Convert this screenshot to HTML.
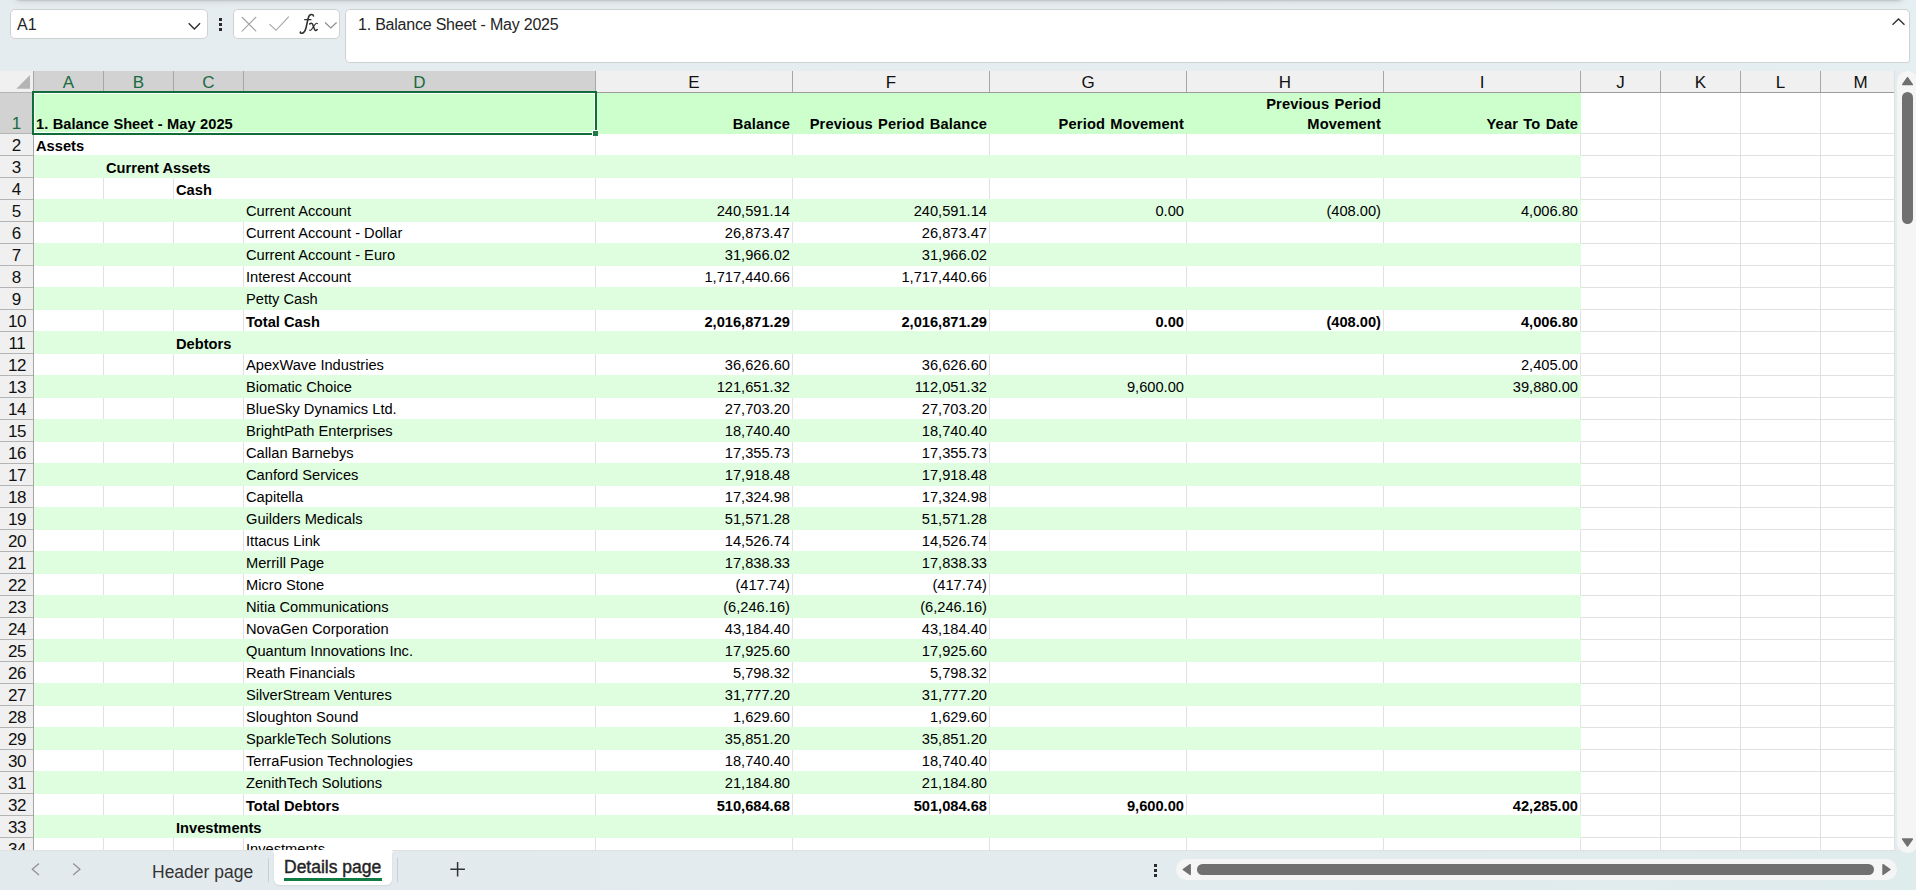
<!DOCTYPE html>
<html><head><meta charset="utf-8"><title>Sheet</title>
<style>
html,body{margin:0;padding:0}
body{width:1916px;height:890px;overflow:hidden;position:relative;font-family:"Liberation Sans",sans-serif;background:#e5ecf0;color:#000}
div,span{box-sizing:border-box}
.abs,.abs *{position:absolute}
#top{position:absolute;left:0;top:0;width:1916px;height:71px;background:linear-gradient(90deg,#e5ecf0 0%,#e6edf1 60%,#e5eef0 100%)}
#topshadow{position:absolute;left:13px;top:-12px;width:1892px;height:12px;border-radius:0 0 8px 8px;box-shadow:0 1px 2px 0 rgba(0,0,0,.13),0 2px 6px 0 rgba(0,0,0,.09)}
.box{position:absolute;background:#fff;border:1px solid #d1d1d1;border-radius:5px}
#grid{position:absolute;left:0;top:71px;width:1894px;height:779px;background:#fff;overflow:hidden}
#grid div{position:absolute}
.t{font-size:14.67px;line-height:22px;height:22px;white-space:pre;color:#000}
.b{font-weight:bold}
.l{letter-spacing:.15px;word-spacing:1px}
.r{text-align:right}
.ch{top:0;height:21px;line-height:24px;overflow:hidden;font-size:17px;text-align:center;color:#222;background:#f0f0f0}
.rh{left:0;width:33px;font-size:17px;line-height:24px;overflow:hidden;text-align:center;color:#222;background:#f0f0f0}
.vl{width:1px;background:#e1e1e1}
.hl{height:1px;background:#e1e1e1}
#bottom{position:absolute;left:0;top:850px;width:1916px;height:40px;background:linear-gradient(90deg,#e3eaed 0%,#e3ebee 55%,#dfecec 100%)}
#bottom div{position:absolute}
</style></head><body>

<div id="top"><div id="topshadow"></div>
<div class="box" style="left:10px;top:9px;width:198px;height:30px"></div>
<div style="position:absolute;left:17px;top:13.8px;font-size:16px;line-height:22px;color:#242424">A1</div>
<svg style="position:absolute;left:186px;top:20px" width="18" height="12" viewBox="0 0 18 12"><path d="M2.7 3.2 L8.4 9 L14.1 3.2" fill="none" stroke="#2b2b2b" stroke-width="1.3"/></svg>
<div style="position:absolute;left:219px;top:18.2px;width:3px;height:3px;background:#2b2b2b"></div>
<div style="position:absolute;left:219px;top:23.2px;width:3px;height:3px;background:#2b2b2b"></div>
<div style="position:absolute;left:219px;top:28.2px;width:3px;height:3px;background:#2b2b2b"></div>
<div class="box" style="left:233px;top:9px;width:107px;height:30px"></div>
<svg style="position:absolute;left:233px;top:9px" width="107" height="30" viewBox="0 0 107 30"><path d="M8.8 8 L23.2 22.3 M23.2 8 L8.8 22.3" fill="none" stroke="#a3a3a3" stroke-width="1.1"/><path d="M36.5 15.2 L43 21.3 L55.8 7.6" fill="none" stroke="#a3a3a3" stroke-width="1.1"/><path d="M92 13.5 L97.8 18.9 L103.6 13.5" fill="none" stroke="#8a8a8a" stroke-width="1.1"/></svg>
<svg style="position:absolute;left:280px;top:5px" width="65" height="40" viewBox="0 0 65 40"><path d="M33.5 11 C33.4 10 32.2 9.5 31 9.6 C29.3 9.9 28.6 11.5 28.1 13.5 L26.2 22 C25.6 25 24.4 28.2 21.6 28.3 C20.6 28.3 20.1 27.8 20.3 27.1" fill="none" stroke="#2e2e2e" stroke-width="1.55" stroke-linecap="round"/><path d="M24.7 14.7 H30.9" fill="none" stroke="#2e2e2e" stroke-width="1.3" stroke-linecap="round"/><path d="M29.8 18.9 C31.3 17.6 32.5 18.4 33 20.2 L34.3 23.9 C34.8 25.7 36 25.9 37.2 24.5" fill="none" stroke="#2e2e2e" stroke-width="1.5" stroke-linecap="round"/><path d="M37.5 18.6 C36.2 17.7 35.3 19 34.2 20.6 L32.4 23.3 C31.4 24.9 30.4 25.9 29.5 25" fill="none" stroke="#2e2e2e" stroke-width="1.05" stroke-linecap="round"/></svg>
<div class="box" style="left:345px;top:9px;width:1565px;height:54px;border-radius:5px 5px 3px 5px"></div>
<div id="ftext" style="position:absolute;left:358px;top:13.8px;font-size:16px;line-height:22px;color:#242424;white-space:pre;letter-spacing:-.22px">1. Balance Sheet - May 2025</div>
<svg style="position:absolute;left:1890px;top:16px" width="18" height="12" viewBox="0 0 18 12"><path d="M2.5 8.8 L8.5 3 L14.5 8.8" fill="none" stroke="#333" stroke-width="1.4"/></svg>
</div>
<div id="grid">
<div style="left:34px;top:22px;width:1547px;height:41px;background:#ccffcc"></div>
<div style="left:34px;top:84px;width:1547px;height:23px;background:#dffddf"></div>
<div style="left:34px;top:128px;width:1547px;height:23px;background:#dffddf"></div>
<div style="left:34px;top:172px;width:1547px;height:23px;background:#dffddf"></div>
<div style="left:34px;top:216px;width:1547px;height:23px;background:#dffddf"></div>
<div style="left:34px;top:260px;width:1547px;height:23px;background:#dffddf"></div>
<div style="left:34px;top:304px;width:1547px;height:23px;background:#dffddf"></div>
<div style="left:34px;top:348px;width:1547px;height:23px;background:#dffddf"></div>
<div style="left:34px;top:392px;width:1547px;height:23px;background:#dffddf"></div>
<div style="left:34px;top:436px;width:1547px;height:23px;background:#dffddf"></div>
<div style="left:34px;top:480px;width:1547px;height:23px;background:#dffddf"></div>
<div style="left:34px;top:524px;width:1547px;height:23px;background:#dffddf"></div>
<div style="left:34px;top:568px;width:1547px;height:23px;background:#dffddf"></div>
<div style="left:34px;top:612px;width:1547px;height:23px;background:#dffddf"></div>
<div style="left:34px;top:656px;width:1547px;height:23px;background:#dffddf"></div>
<div style="left:34px;top:700px;width:1547px;height:23px;background:#dffddf"></div>
<div style="left:34px;top:744px;width:1547px;height:23px;background:#dffddf"></div>
<div class="hl" style="left:1581px;top:62px;width:313px"></div>
<div class="hl" style="left:1581px;top:84px;width:313px"></div>
<div class="hl" style="left:1581px;top:106px;width:313px"></div>
<div class="hl" style="left:1581px;top:128px;width:313px"></div>
<div class="hl" style="left:1581px;top:150px;width:313px"></div>
<div class="hl" style="left:1581px;top:172px;width:313px"></div>
<div class="hl" style="left:1581px;top:194px;width:313px"></div>
<div class="hl" style="left:1581px;top:216px;width:313px"></div>
<div class="hl" style="left:1581px;top:238px;width:313px"></div>
<div class="hl" style="left:1581px;top:260px;width:313px"></div>
<div class="hl" style="left:1581px;top:282px;width:313px"></div>
<div class="hl" style="left:1581px;top:304px;width:313px"></div>
<div class="hl" style="left:1581px;top:326px;width:313px"></div>
<div class="hl" style="left:1581px;top:348px;width:313px"></div>
<div class="hl" style="left:1581px;top:370px;width:313px"></div>
<div class="hl" style="left:1581px;top:392px;width:313px"></div>
<div class="hl" style="left:1581px;top:414px;width:313px"></div>
<div class="hl" style="left:1581px;top:436px;width:313px"></div>
<div class="hl" style="left:1581px;top:458px;width:313px"></div>
<div class="hl" style="left:1581px;top:480px;width:313px"></div>
<div class="hl" style="left:1581px;top:502px;width:313px"></div>
<div class="hl" style="left:1581px;top:524px;width:313px"></div>
<div class="hl" style="left:1581px;top:546px;width:313px"></div>
<div class="hl" style="left:1581px;top:568px;width:313px"></div>
<div class="hl" style="left:1581px;top:590px;width:313px"></div>
<div class="hl" style="left:1581px;top:612px;width:313px"></div>
<div class="hl" style="left:1581px;top:634px;width:313px"></div>
<div class="hl" style="left:1581px;top:656px;width:313px"></div>
<div class="hl" style="left:1581px;top:678px;width:313px"></div>
<div class="hl" style="left:1581px;top:700px;width:313px"></div>
<div class="hl" style="left:1581px;top:722px;width:313px"></div>
<div class="hl" style="left:1581px;top:744px;width:313px"></div>
<div class="hl" style="left:1581px;top:766px;width:313px"></div>
<div class="hl" style="left:1581px;top:788px;width:313px"></div>
<div class="vl" style="left:1660px;top:22px;height:757px"></div>
<div class="vl" style="left:1740px;top:22px;height:757px"></div>
<div class="vl" style="left:1820px;top:22px;height:757px"></div>
<div class="vl" style="left:595px;top:63px;height:21px"></div>
<div class="vl" style="left:792px;top:63px;height:21px"></div>
<div class="vl" style="left:989px;top:63px;height:21px"></div>
<div class="vl" style="left:1186px;top:63px;height:21px"></div>
<div class="vl" style="left:1383px;top:63px;height:21px"></div>
<div class="vl" style="left:1580px;top:63px;height:21px"></div>
<div class="vl" style="left:103px;top:107px;height:21px"></div>
<div class="vl" style="left:173px;top:107px;height:21px"></div>
<div class="vl" style="left:595px;top:107px;height:21px"></div>
<div class="vl" style="left:792px;top:107px;height:21px"></div>
<div class="vl" style="left:989px;top:107px;height:21px"></div>
<div class="vl" style="left:1186px;top:107px;height:21px"></div>
<div class="vl" style="left:1383px;top:107px;height:21px"></div>
<div class="vl" style="left:1580px;top:107px;height:21px"></div>
<div class="vl" style="left:103px;top:151px;height:21px"></div>
<div class="vl" style="left:173px;top:151px;height:21px"></div>
<div class="vl" style="left:243px;top:151px;height:21px"></div>
<div class="vl" style="left:595px;top:151px;height:21px"></div>
<div class="vl" style="left:792px;top:151px;height:21px"></div>
<div class="vl" style="left:989px;top:151px;height:21px"></div>
<div class="vl" style="left:1186px;top:151px;height:21px"></div>
<div class="vl" style="left:1383px;top:151px;height:21px"></div>
<div class="vl" style="left:1580px;top:151px;height:21px"></div>
<div class="vl" style="left:103px;top:195px;height:21px"></div>
<div class="vl" style="left:173px;top:195px;height:21px"></div>
<div class="vl" style="left:243px;top:195px;height:21px"></div>
<div class="vl" style="left:595px;top:195px;height:21px"></div>
<div class="vl" style="left:792px;top:195px;height:21px"></div>
<div class="vl" style="left:989px;top:195px;height:21px"></div>
<div class="vl" style="left:1186px;top:195px;height:21px"></div>
<div class="vl" style="left:1383px;top:195px;height:21px"></div>
<div class="vl" style="left:1580px;top:195px;height:21px"></div>
<div class="vl" style="left:103px;top:239px;height:21px"></div>
<div class="vl" style="left:173px;top:239px;height:21px"></div>
<div class="vl" style="left:243px;top:239px;height:21px"></div>
<div class="vl" style="left:595px;top:239px;height:21px"></div>
<div class="vl" style="left:792px;top:239px;height:21px"></div>
<div class="vl" style="left:989px;top:239px;height:21px"></div>
<div class="vl" style="left:1186px;top:239px;height:21px"></div>
<div class="vl" style="left:1383px;top:239px;height:21px"></div>
<div class="vl" style="left:1580px;top:239px;height:21px"></div>
<div class="vl" style="left:103px;top:283px;height:21px"></div>
<div class="vl" style="left:173px;top:283px;height:21px"></div>
<div class="vl" style="left:243px;top:283px;height:21px"></div>
<div class="vl" style="left:595px;top:283px;height:21px"></div>
<div class="vl" style="left:792px;top:283px;height:21px"></div>
<div class="vl" style="left:989px;top:283px;height:21px"></div>
<div class="vl" style="left:1186px;top:283px;height:21px"></div>
<div class="vl" style="left:1383px;top:283px;height:21px"></div>
<div class="vl" style="left:1580px;top:283px;height:21px"></div>
<div class="vl" style="left:103px;top:327px;height:21px"></div>
<div class="vl" style="left:173px;top:327px;height:21px"></div>
<div class="vl" style="left:243px;top:327px;height:21px"></div>
<div class="vl" style="left:595px;top:327px;height:21px"></div>
<div class="vl" style="left:792px;top:327px;height:21px"></div>
<div class="vl" style="left:989px;top:327px;height:21px"></div>
<div class="vl" style="left:1186px;top:327px;height:21px"></div>
<div class="vl" style="left:1383px;top:327px;height:21px"></div>
<div class="vl" style="left:1580px;top:327px;height:21px"></div>
<div class="vl" style="left:103px;top:371px;height:21px"></div>
<div class="vl" style="left:173px;top:371px;height:21px"></div>
<div class="vl" style="left:243px;top:371px;height:21px"></div>
<div class="vl" style="left:595px;top:371px;height:21px"></div>
<div class="vl" style="left:792px;top:371px;height:21px"></div>
<div class="vl" style="left:989px;top:371px;height:21px"></div>
<div class="vl" style="left:1186px;top:371px;height:21px"></div>
<div class="vl" style="left:1383px;top:371px;height:21px"></div>
<div class="vl" style="left:1580px;top:371px;height:21px"></div>
<div class="vl" style="left:103px;top:415px;height:21px"></div>
<div class="vl" style="left:173px;top:415px;height:21px"></div>
<div class="vl" style="left:243px;top:415px;height:21px"></div>
<div class="vl" style="left:595px;top:415px;height:21px"></div>
<div class="vl" style="left:792px;top:415px;height:21px"></div>
<div class="vl" style="left:989px;top:415px;height:21px"></div>
<div class="vl" style="left:1186px;top:415px;height:21px"></div>
<div class="vl" style="left:1383px;top:415px;height:21px"></div>
<div class="vl" style="left:1580px;top:415px;height:21px"></div>
<div class="vl" style="left:103px;top:459px;height:21px"></div>
<div class="vl" style="left:173px;top:459px;height:21px"></div>
<div class="vl" style="left:243px;top:459px;height:21px"></div>
<div class="vl" style="left:595px;top:459px;height:21px"></div>
<div class="vl" style="left:792px;top:459px;height:21px"></div>
<div class="vl" style="left:989px;top:459px;height:21px"></div>
<div class="vl" style="left:1186px;top:459px;height:21px"></div>
<div class="vl" style="left:1383px;top:459px;height:21px"></div>
<div class="vl" style="left:1580px;top:459px;height:21px"></div>
<div class="vl" style="left:103px;top:503px;height:21px"></div>
<div class="vl" style="left:173px;top:503px;height:21px"></div>
<div class="vl" style="left:243px;top:503px;height:21px"></div>
<div class="vl" style="left:595px;top:503px;height:21px"></div>
<div class="vl" style="left:792px;top:503px;height:21px"></div>
<div class="vl" style="left:989px;top:503px;height:21px"></div>
<div class="vl" style="left:1186px;top:503px;height:21px"></div>
<div class="vl" style="left:1383px;top:503px;height:21px"></div>
<div class="vl" style="left:1580px;top:503px;height:21px"></div>
<div class="vl" style="left:103px;top:547px;height:21px"></div>
<div class="vl" style="left:173px;top:547px;height:21px"></div>
<div class="vl" style="left:243px;top:547px;height:21px"></div>
<div class="vl" style="left:595px;top:547px;height:21px"></div>
<div class="vl" style="left:792px;top:547px;height:21px"></div>
<div class="vl" style="left:989px;top:547px;height:21px"></div>
<div class="vl" style="left:1186px;top:547px;height:21px"></div>
<div class="vl" style="left:1383px;top:547px;height:21px"></div>
<div class="vl" style="left:1580px;top:547px;height:21px"></div>
<div class="vl" style="left:103px;top:591px;height:21px"></div>
<div class="vl" style="left:173px;top:591px;height:21px"></div>
<div class="vl" style="left:243px;top:591px;height:21px"></div>
<div class="vl" style="left:595px;top:591px;height:21px"></div>
<div class="vl" style="left:792px;top:591px;height:21px"></div>
<div class="vl" style="left:989px;top:591px;height:21px"></div>
<div class="vl" style="left:1186px;top:591px;height:21px"></div>
<div class="vl" style="left:1383px;top:591px;height:21px"></div>
<div class="vl" style="left:1580px;top:591px;height:21px"></div>
<div class="vl" style="left:103px;top:635px;height:21px"></div>
<div class="vl" style="left:173px;top:635px;height:21px"></div>
<div class="vl" style="left:243px;top:635px;height:21px"></div>
<div class="vl" style="left:595px;top:635px;height:21px"></div>
<div class="vl" style="left:792px;top:635px;height:21px"></div>
<div class="vl" style="left:989px;top:635px;height:21px"></div>
<div class="vl" style="left:1186px;top:635px;height:21px"></div>
<div class="vl" style="left:1383px;top:635px;height:21px"></div>
<div class="vl" style="left:1580px;top:635px;height:21px"></div>
<div class="vl" style="left:103px;top:679px;height:21px"></div>
<div class="vl" style="left:173px;top:679px;height:21px"></div>
<div class="vl" style="left:243px;top:679px;height:21px"></div>
<div class="vl" style="left:595px;top:679px;height:21px"></div>
<div class="vl" style="left:792px;top:679px;height:21px"></div>
<div class="vl" style="left:989px;top:679px;height:21px"></div>
<div class="vl" style="left:1186px;top:679px;height:21px"></div>
<div class="vl" style="left:1383px;top:679px;height:21px"></div>
<div class="vl" style="left:1580px;top:679px;height:21px"></div>
<div class="vl" style="left:103px;top:723px;height:21px"></div>
<div class="vl" style="left:173px;top:723px;height:21px"></div>
<div class="vl" style="left:243px;top:723px;height:21px"></div>
<div class="vl" style="left:595px;top:723px;height:21px"></div>
<div class="vl" style="left:792px;top:723px;height:21px"></div>
<div class="vl" style="left:989px;top:723px;height:21px"></div>
<div class="vl" style="left:1186px;top:723px;height:21px"></div>
<div class="vl" style="left:1383px;top:723px;height:21px"></div>
<div class="vl" style="left:1580px;top:723px;height:21px"></div>
<div class="vl" style="left:103px;top:767px;height:21px"></div>
<div class="vl" style="left:173px;top:767px;height:21px"></div>
<div class="vl" style="left:243px;top:767px;height:21px"></div>
<div class="vl" style="left:595px;top:767px;height:21px"></div>
<div class="vl" style="left:792px;top:767px;height:21px"></div>
<div class="vl" style="left:989px;top:767px;height:21px"></div>
<div class="vl" style="left:1186px;top:767px;height:21px"></div>
<div class="vl" style="left:1383px;top:767px;height:21px"></div>
<div class="vl" style="left:1580px;top:767px;height:21px"></div>
<div class="t b" style="left:36px;top:43px;width:550px;height:20px;line-height:20px;word-spacing:.4px">1. Balance Sheet - May 2025</div>
<div class="t b l" style="left:596px;top:43px;width:194px;height:20px;line-height:20px;text-align:right;">Balance</div>
<div class="t b l" style="left:793px;top:43px;width:194px;height:20px;line-height:20px;text-align:right;">Previous Period Balance</div>
<div class="t b l" style="left:990px;top:43px;width:194px;height:20px;line-height:20px;text-align:right;">Period Movement</div>
<div class="t b l" style="left:1187px;top:23px;width:194px;height:40px;line-height:20px;text-align:right;">Previous Period<br>Movement</div>
<div class="t b l" style="left:1384px;top:43px;width:194px;height:20px;line-height:20px;text-align:right;">Year To Date</div>
<div class="t b" style="left:36px;top:64px;width:400px;">Assets</div>
<div class="t b" style="left:106px;top:86px;width:400px;">Current Assets</div>
<div class="t b" style="left:176px;top:108px;width:400px;">Cash</div>
<div class="t" style="left:246px;top:129px;width:400px;">Current Account</div>
<div class="t r" style="left:596px;top:129px;width:194px;">240,591.14</div>
<div class="t r" style="left:793px;top:129px;width:194px;">240,591.14</div>
<div class="t r" style="left:990px;top:129px;width:194px;">0.00</div>
<div class="t r" style="left:1187px;top:129px;width:194px;">(408.00)</div>
<div class="t r" style="left:1384px;top:129px;width:194px;">4,006.80</div>
<div class="t" style="left:246px;top:151px;width:400px;">Current Account - Dollar</div>
<div class="t r" style="left:596px;top:151px;width:194px;">26,873.47</div>
<div class="t r" style="left:793px;top:151px;width:194px;">26,873.47</div>
<div class="t" style="left:246px;top:173px;width:400px;">Current Account - Euro</div>
<div class="t r" style="left:596px;top:173px;width:194px;">31,966.02</div>
<div class="t r" style="left:793px;top:173px;width:194px;">31,966.02</div>
<div class="t" style="left:246px;top:195px;width:400px;">Interest Account</div>
<div class="t r" style="left:596px;top:195px;width:194px;">1,717,440.66</div>
<div class="t r" style="left:793px;top:195px;width:194px;">1,717,440.66</div>
<div class="t" style="left:246px;top:217px;width:400px;">Petty Cash</div>
<div class="t b" style="left:246px;top:240px;width:400px;">Total Cash</div>
<div class="t b r" style="left:596px;top:240px;width:194px;">2,016,871.29</div>
<div class="t b r" style="left:793px;top:240px;width:194px;">2,016,871.29</div>
<div class="t b r" style="left:990px;top:240px;width:194px;">0.00</div>
<div class="t b r" style="left:1187px;top:240px;width:194px;">(408.00)</div>
<div class="t b r" style="left:1384px;top:240px;width:194px;">4,006.80</div>
<div class="t b" style="left:176px;top:262px;width:400px;">Debtors</div>
<div class="t" style="left:246px;top:283px;width:400px;">ApexWave Industries</div>
<div class="t r" style="left:596px;top:283px;width:194px;">36,626.60</div>
<div class="t r" style="left:793px;top:283px;width:194px;">36,626.60</div>
<div class="t r" style="left:1384px;top:283px;width:194px;">2,405.00</div>
<div class="t" style="left:246px;top:305px;width:400px;">Biomatic Choice</div>
<div class="t r" style="left:596px;top:305px;width:194px;">121,651.32</div>
<div class="t r" style="left:793px;top:305px;width:194px;">112,051.32</div>
<div class="t r" style="left:990px;top:305px;width:194px;">9,600.00</div>
<div class="t r" style="left:1384px;top:305px;width:194px;">39,880.00</div>
<div class="t" style="left:246px;top:327px;width:400px;">BlueSky Dynamics Ltd.</div>
<div class="t r" style="left:596px;top:327px;width:194px;">27,703.20</div>
<div class="t r" style="left:793px;top:327px;width:194px;">27,703.20</div>
<div class="t" style="left:246px;top:349px;width:400px;">BrightPath Enterprises</div>
<div class="t r" style="left:596px;top:349px;width:194px;">18,740.40</div>
<div class="t r" style="left:793px;top:349px;width:194px;">18,740.40</div>
<div class="t" style="left:246px;top:371px;width:400px;">Callan Barnebys</div>
<div class="t r" style="left:596px;top:371px;width:194px;">17,355.73</div>
<div class="t r" style="left:793px;top:371px;width:194px;">17,355.73</div>
<div class="t" style="left:246px;top:393px;width:400px;">Canford Services</div>
<div class="t r" style="left:596px;top:393px;width:194px;">17,918.48</div>
<div class="t r" style="left:793px;top:393px;width:194px;">17,918.48</div>
<div class="t" style="left:246px;top:415px;width:400px;">Capitella</div>
<div class="t r" style="left:596px;top:415px;width:194px;">17,324.98</div>
<div class="t r" style="left:793px;top:415px;width:194px;">17,324.98</div>
<div class="t" style="left:246px;top:437px;width:400px;">Guilders Medicals</div>
<div class="t r" style="left:596px;top:437px;width:194px;">51,571.28</div>
<div class="t r" style="left:793px;top:437px;width:194px;">51,571.28</div>
<div class="t" style="left:246px;top:459px;width:400px;">Ittacus Link</div>
<div class="t r" style="left:596px;top:459px;width:194px;">14,526.74</div>
<div class="t r" style="left:793px;top:459px;width:194px;">14,526.74</div>
<div class="t" style="left:246px;top:481px;width:400px;">Merrill Page</div>
<div class="t r" style="left:596px;top:481px;width:194px;">17,838.33</div>
<div class="t r" style="left:793px;top:481px;width:194px;">17,838.33</div>
<div class="t" style="left:246px;top:503px;width:400px;">Micro Stone</div>
<div class="t r" style="left:596px;top:503px;width:194px;">(417.74)</div>
<div class="t r" style="left:793px;top:503px;width:194px;">(417.74)</div>
<div class="t" style="left:246px;top:525px;width:400px;">Nitia Communications</div>
<div class="t r" style="left:596px;top:525px;width:194px;">(6,246.16)</div>
<div class="t r" style="left:793px;top:525px;width:194px;">(6,246.16)</div>
<div class="t" style="left:246px;top:547px;width:400px;">NovaGen Corporation</div>
<div class="t r" style="left:596px;top:547px;width:194px;">43,184.40</div>
<div class="t r" style="left:793px;top:547px;width:194px;">43,184.40</div>
<div class="t" style="left:246px;top:569px;width:400px;">Quantum Innovations Inc.</div>
<div class="t r" style="left:596px;top:569px;width:194px;">17,925.60</div>
<div class="t r" style="left:793px;top:569px;width:194px;">17,925.60</div>
<div class="t" style="left:246px;top:591px;width:400px;">Reath Financials</div>
<div class="t r" style="left:596px;top:591px;width:194px;">5,798.32</div>
<div class="t r" style="left:793px;top:591px;width:194px;">5,798.32</div>
<div class="t" style="left:246px;top:613px;width:400px;">SilverStream Ventures</div>
<div class="t r" style="left:596px;top:613px;width:194px;">31,777.20</div>
<div class="t r" style="left:793px;top:613px;width:194px;">31,777.20</div>
<div class="t" style="left:246px;top:635px;width:400px;">Sloughton Sound</div>
<div class="t r" style="left:596px;top:635px;width:194px;">1,629.60</div>
<div class="t r" style="left:793px;top:635px;width:194px;">1,629.60</div>
<div class="t" style="left:246px;top:657px;width:400px;">SparkleTech Solutions</div>
<div class="t r" style="left:596px;top:657px;width:194px;">35,851.20</div>
<div class="t r" style="left:793px;top:657px;width:194px;">35,851.20</div>
<div class="t" style="left:246px;top:679px;width:400px;">TerraFusion Technologies</div>
<div class="t r" style="left:596px;top:679px;width:194px;">18,740.40</div>
<div class="t r" style="left:793px;top:679px;width:194px;">18,740.40</div>
<div class="t" style="left:246px;top:701px;width:400px;">ZenithTech Solutions</div>
<div class="t r" style="left:596px;top:701px;width:194px;">21,184.80</div>
<div class="t r" style="left:793px;top:701px;width:194px;">21,184.80</div>
<div class="t b" style="left:246px;top:724px;width:400px;">Total Debtors</div>
<div class="t b r" style="left:596px;top:724px;width:194px;">510,684.68</div>
<div class="t b r" style="left:793px;top:724px;width:194px;">501,084.68</div>
<div class="t b r" style="left:990px;top:724px;width:194px;">9,600.00</div>
<div class="t b r" style="left:1384px;top:724px;width:194px;">42,285.00</div>
<div class="t b" style="left:176px;top:746px;width:400px;">Investments</div>
<div class="t" style="left:246px;top:767px;width:400px;">Investments</div>
<div style="left:0;top:0;width:1894px;height:21px;background:#f0f0f0"></div>
<div class="ch" style="left:34px;width:69px;background:#d2d2d2;color:#1b6a40">A</div>
<div style="left:103px;top:0;width:1px;height:21px;background:#a6a6a6"></div>
<div class="ch" style="left:104px;width:69px;background:#d2d2d2;color:#1b6a40">B</div>
<div style="left:173px;top:0;width:1px;height:21px;background:#a6a6a6"></div>
<div class="ch" style="left:174px;width:69px;background:#d2d2d2;color:#1b6a40">C</div>
<div style="left:243px;top:0;width:1px;height:21px;background:#a6a6a6"></div>
<div class="ch" style="left:244px;width:351px;background:#d2d2d2;color:#1b6a40">D</div>
<div style="left:595px;top:0;width:1px;height:21px;background:#a6a6a6"></div>
<div class="ch" style="left:596px;width:196px;background:#f0f0f0;color:#111">E</div>
<div style="left:792px;top:0;width:1px;height:21px;background:#a6a6a6"></div>
<div class="ch" style="left:793px;width:196px;background:#f0f0f0;color:#111">F</div>
<div style="left:989px;top:0;width:1px;height:21px;background:#a6a6a6"></div>
<div class="ch" style="left:990px;width:196px;background:#f0f0f0;color:#111">G</div>
<div style="left:1186px;top:0;width:1px;height:21px;background:#a6a6a6"></div>
<div class="ch" style="left:1187px;width:196px;background:#f0f0f0;color:#111">H</div>
<div style="left:1383px;top:0;width:1px;height:21px;background:#a6a6a6"></div>
<div class="ch" style="left:1384px;width:196px;background:#f0f0f0;color:#111">I</div>
<div style="left:1580px;top:0;width:1px;height:21px;background:#a6a6a6"></div>
<div class="ch" style="left:1581px;width:79px;background:#f0f0f0;color:#111">J</div>
<div style="left:1660px;top:0;width:1px;height:21px;background:#a6a6a6"></div>
<div class="ch" style="left:1661px;width:79px;background:#f0f0f0;color:#111">K</div>
<div style="left:1740px;top:0;width:1px;height:21px;background:#a6a6a6"></div>
<div class="ch" style="left:1741px;width:79px;background:#f0f0f0;color:#111">L</div>
<div style="left:1820px;top:0;width:1px;height:21px;background:#a6a6a6"></div>
<div class="ch" style="left:1821px;width:79px;background:#f0f0f0;color:#111">M</div>
<div style="left:1900px;top:0;width:1px;height:21px;background:#a6a6a6"></div>
<div style="left:0;top:21px;width:1894px;height:1px;background:#9c9c9c"></div>
<div style="left:0;top:0;width:33px;height:21px;background:#f0f0f0"></div>
<div style="left:33px;top:0;width:1px;height:21px;background:#a6a6a6"></div>
<svg style="position:absolute;left:0;top:0" width="33" height="21" viewBox="0 0 33 21"><path d="M16.3 17.8 L30 17.8 L30 4.1 Z" fill="#b4b4b4"/></svg>
<div style="left:0;top:21px;width:33px;height:1px;background:#b4b4b4"></div>
<div class="rh" style="top:22px;height:40px;background:#d2d2d2"></div>
<div class="rh" style="top:41px;height:21px;background:transparent;color:#1b6a40">1</div>
<div style="left:0;top:62px;width:33px;height:1px;background:#b4b4b4"></div>
<div class="rh" style="top:63px;height:21px;background:#f0f0f0;color:#111;">2</div>
<div style="left:0;top:84px;width:33px;height:1px;background:#b4b4b4"></div>
<div class="rh" style="top:85px;height:21px;background:#f0f0f0;color:#111;">3</div>
<div style="left:0;top:106px;width:33px;height:1px;background:#b4b4b4"></div>
<div class="rh" style="top:107px;height:21px;background:#f0f0f0;color:#111;">4</div>
<div style="left:0;top:128px;width:33px;height:1px;background:#b4b4b4"></div>
<div class="rh" style="top:129px;height:21px;background:#f0f0f0;color:#111;">5</div>
<div style="left:0;top:150px;width:33px;height:1px;background:#b4b4b4"></div>
<div class="rh" style="top:151px;height:21px;background:#f0f0f0;color:#111;">6</div>
<div style="left:0;top:172px;width:33px;height:1px;background:#b4b4b4"></div>
<div class="rh" style="top:173px;height:21px;background:#f0f0f0;color:#111;">7</div>
<div style="left:0;top:194px;width:33px;height:1px;background:#b4b4b4"></div>
<div class="rh" style="top:195px;height:21px;background:#f0f0f0;color:#111;">8</div>
<div style="left:0;top:216px;width:33px;height:1px;background:#b4b4b4"></div>
<div class="rh" style="top:217px;height:21px;background:#f0f0f0;color:#111;">9</div>
<div style="left:0;top:238px;width:33px;height:1px;background:#b4b4b4"></div>
<div class="rh" style="top:239px;height:21px;background:#f0f0f0;color:#111;letter-spacing:-.45px;padding-left:.9px;">10</div>
<div style="left:0;top:260px;width:33px;height:1px;background:#b4b4b4"></div>
<div class="rh" style="top:261px;height:21px;background:#f0f0f0;color:#111;letter-spacing:-.45px;padding-left:.9px;">11</div>
<div style="left:0;top:282px;width:33px;height:1px;background:#b4b4b4"></div>
<div class="rh" style="top:283px;height:21px;background:#f0f0f0;color:#111;letter-spacing:-.45px;padding-left:.9px;">12</div>
<div style="left:0;top:304px;width:33px;height:1px;background:#b4b4b4"></div>
<div class="rh" style="top:305px;height:21px;background:#f0f0f0;color:#111;letter-spacing:-.45px;padding-left:.9px;">13</div>
<div style="left:0;top:326px;width:33px;height:1px;background:#b4b4b4"></div>
<div class="rh" style="top:327px;height:21px;background:#f0f0f0;color:#111;letter-spacing:-.45px;padding-left:.9px;">14</div>
<div style="left:0;top:348px;width:33px;height:1px;background:#b4b4b4"></div>
<div class="rh" style="top:349px;height:21px;background:#f0f0f0;color:#111;letter-spacing:-.45px;padding-left:.9px;">15</div>
<div style="left:0;top:370px;width:33px;height:1px;background:#b4b4b4"></div>
<div class="rh" style="top:371px;height:21px;background:#f0f0f0;color:#111;letter-spacing:-.45px;padding-left:.9px;">16</div>
<div style="left:0;top:392px;width:33px;height:1px;background:#b4b4b4"></div>
<div class="rh" style="top:393px;height:21px;background:#f0f0f0;color:#111;letter-spacing:-.45px;padding-left:.9px;">17</div>
<div style="left:0;top:414px;width:33px;height:1px;background:#b4b4b4"></div>
<div class="rh" style="top:415px;height:21px;background:#f0f0f0;color:#111;letter-spacing:-.45px;padding-left:.9px;">18</div>
<div style="left:0;top:436px;width:33px;height:1px;background:#b4b4b4"></div>
<div class="rh" style="top:437px;height:21px;background:#f0f0f0;color:#111;letter-spacing:-.45px;padding-left:.9px;">19</div>
<div style="left:0;top:458px;width:33px;height:1px;background:#b4b4b4"></div>
<div class="rh" style="top:459px;height:21px;background:#f0f0f0;color:#111;letter-spacing:-.45px;padding-left:.9px;">20</div>
<div style="left:0;top:480px;width:33px;height:1px;background:#b4b4b4"></div>
<div class="rh" style="top:481px;height:21px;background:#f0f0f0;color:#111;letter-spacing:-.45px;padding-left:.9px;">21</div>
<div style="left:0;top:502px;width:33px;height:1px;background:#b4b4b4"></div>
<div class="rh" style="top:503px;height:21px;background:#f0f0f0;color:#111;letter-spacing:-.45px;padding-left:.9px;">22</div>
<div style="left:0;top:524px;width:33px;height:1px;background:#b4b4b4"></div>
<div class="rh" style="top:525px;height:21px;background:#f0f0f0;color:#111;letter-spacing:-.45px;padding-left:.9px;">23</div>
<div style="left:0;top:546px;width:33px;height:1px;background:#b4b4b4"></div>
<div class="rh" style="top:547px;height:21px;background:#f0f0f0;color:#111;letter-spacing:-.45px;padding-left:.9px;">24</div>
<div style="left:0;top:568px;width:33px;height:1px;background:#b4b4b4"></div>
<div class="rh" style="top:569px;height:21px;background:#f0f0f0;color:#111;letter-spacing:-.45px;padding-left:.9px;">25</div>
<div style="left:0;top:590px;width:33px;height:1px;background:#b4b4b4"></div>
<div class="rh" style="top:591px;height:21px;background:#f0f0f0;color:#111;letter-spacing:-.45px;padding-left:.9px;">26</div>
<div style="left:0;top:612px;width:33px;height:1px;background:#b4b4b4"></div>
<div class="rh" style="top:613px;height:21px;background:#f0f0f0;color:#111;letter-spacing:-.45px;padding-left:.9px;">27</div>
<div style="left:0;top:634px;width:33px;height:1px;background:#b4b4b4"></div>
<div class="rh" style="top:635px;height:21px;background:#f0f0f0;color:#111;letter-spacing:-.45px;padding-left:.9px;">28</div>
<div style="left:0;top:656px;width:33px;height:1px;background:#b4b4b4"></div>
<div class="rh" style="top:657px;height:21px;background:#f0f0f0;color:#111;letter-spacing:-.45px;padding-left:.9px;">29</div>
<div style="left:0;top:678px;width:33px;height:1px;background:#b4b4b4"></div>
<div class="rh" style="top:679px;height:21px;background:#f0f0f0;color:#111;letter-spacing:-.45px;padding-left:.9px;">30</div>
<div style="left:0;top:700px;width:33px;height:1px;background:#b4b4b4"></div>
<div class="rh" style="top:701px;height:21px;background:#f0f0f0;color:#111;letter-spacing:-.45px;padding-left:.9px;">31</div>
<div style="left:0;top:722px;width:33px;height:1px;background:#b4b4b4"></div>
<div class="rh" style="top:723px;height:21px;background:#f0f0f0;color:#111;letter-spacing:-.45px;padding-left:.9px;">32</div>
<div style="left:0;top:744px;width:33px;height:1px;background:#b4b4b4"></div>
<div class="rh" style="top:745px;height:21px;background:#f0f0f0;color:#111;letter-spacing:-.45px;padding-left:.9px;">33</div>
<div style="left:0;top:766px;width:33px;height:1px;background:#b4b4b4"></div>
<div class="rh" style="top:767px;height:21px;background:#f0f0f0;color:#111;letter-spacing:-.45px;padding-left:.9px;">34</div>
<div style="left:0;top:788px;width:33px;height:1px;background:#b4b4b4"></div>
<div style="left:33px;top:22px;width:1px;height:757px;background:#a6a6a6"></div>
<div style="left:32px;top:20px;width:565px;height:44px;border:2px solid #0f6d3a;"></div>
<div style="left:34px;top:22px;width:561px;height:40px;border:1px solid #fff;"></div>
<div style="left:592px;top:59px;width:6px;height:6px;background:#fff"></div>
<div style="left:593px;top:60px;width:5px;height:5px;background:#21794a"></div>
</div>
<div style="position:absolute;left:1894px;top:71px;width:1px;height:780px;background:#e0e0e0"></div>
<div style="position:absolute;z-index:4;left:0;top:850px;width:274px;height:1px;background:#e0e0e0"></div>
<div style="position:absolute;z-index:4;left:392px;top:850px;width:1503px;height:1px;background:#e0e0e0"></div>
<div style="position:absolute;z-index:5;left:1897px;top:71px;width:21px;height:782px;border-radius:10.5px;background:#f5f5f5"></div>
<div style="position:absolute;z-index:6;left:1902px;top:92px;width:11px;height:132px;border-radius:5.5px;background:#707070"></div>
<svg style="position:absolute;z-index:6;left:1900px;top:74px" width="16" height="14" viewBox="0 0 16 14"><path d="M2.6 10.6 L7.5 3.6 L12.4 10.6 Z" fill="#707070" stroke="#707070" stroke-width="1.4" stroke-linejoin="round"/></svg>
<svg style="position:absolute;z-index:6;left:1900px;top:835px" width="16" height="14" viewBox="0 0 16 14"><path d="M2.6 4 L7.5 11 L12.4 4 Z" fill="#707070" stroke="#707070" stroke-width="1.4" stroke-linejoin="round"/></svg>
<div id="bottom">
<svg style="position:absolute;left:25px;top:10px" width="70" height="20" viewBox="0 0 70 20"><path d="M14 3.5 L7.3 9.3 L14 15" fill="none" stroke="#919191" stroke-width="1.3"/><path d="M48.2 3.5 L54.9 9.3 L48.2 15" fill="none" stroke="#919191" stroke-width="1.3"/></svg>
<div id="tab1" style="left:152px;top:9.6px;font-size:17.5px;line-height:24px;color:#333;white-space:pre">Header page</div>
<div style="left:268px;top:8px;width:1px;height:24px;background:#c9d0d3"></div>
<div style="left:397px;top:8px;width:1px;height:24px;background:#c9d0d3"></div>
<div style="left:274px;top:0;width:118px;height:35px;background:#fff;border-radius:0 0 6px 6px;box-shadow:0 1px 2px rgba(0,0,0,.08)"></div>
<div style="left:270px;top:0;width:4px;height:4px;background:radial-gradient(circle at 0 100%,rgba(255,255,255,0) 3.5px,#fff 4px)"></div>
<div style="left:392px;top:0;width:4px;height:4px;background:radial-gradient(circle at 100% 100%,rgba(255,255,255,0) 3.5px,#fff 4px)"></div>
<div id="tab2" style="left:284px;top:4.8px;font-size:17.5px;line-height:24px;color:#242424;-webkit-text-stroke:.4px #242424;letter-spacing:0px;white-space:pre">Details page</div>
<div style="left:284px;top:28px;width:98px;height:3px;background:#107c41"></div>
<svg style="position:absolute;left:449px;top:11px" width="18" height="18" viewBox="0 0 18 18"><path d="M1.3 8.3 H15.9 M8.6 1 V15.6" fill="none" stroke="#333" stroke-width="1.5"/></svg>
<div style="left:1154px;top:14px;width:3px;height:3px;background:#2b2b2b"></div>
<div style="left:1154px;top:19px;width:3px;height:3px;background:#2b2b2b"></div>
<div style="left:1154px;top:24px;width:3px;height:3px;background:#2b2b2b"></div>
<div style="left:1176px;top:9px;width:721px;height:21px;border-radius:10.5px;background:#f5f5f5"></div>
<div style="left:1197px;top:14px;width:677px;height:11px;border-radius:5.5px;background:#707070"></div>
<svg style="position:absolute;left:1180px;top:12px" width="14" height="16" viewBox="0 0 14 16"><path d="M10.2 2.6 L3.2 7.5 L10.2 12.4 Z" fill="#707070" stroke="#707070" stroke-width="1.4" stroke-linejoin="round"/></svg>
<svg style="position:absolute;left:1880px;top:12px" width="14" height="16" viewBox="0 0 14 16"><path d="M3 2.6 L10 7.5 L3 12.4 Z" fill="#707070" stroke="#707070" stroke-width="1.4" stroke-linejoin="round"/></svg>
</div>
</body></html>
